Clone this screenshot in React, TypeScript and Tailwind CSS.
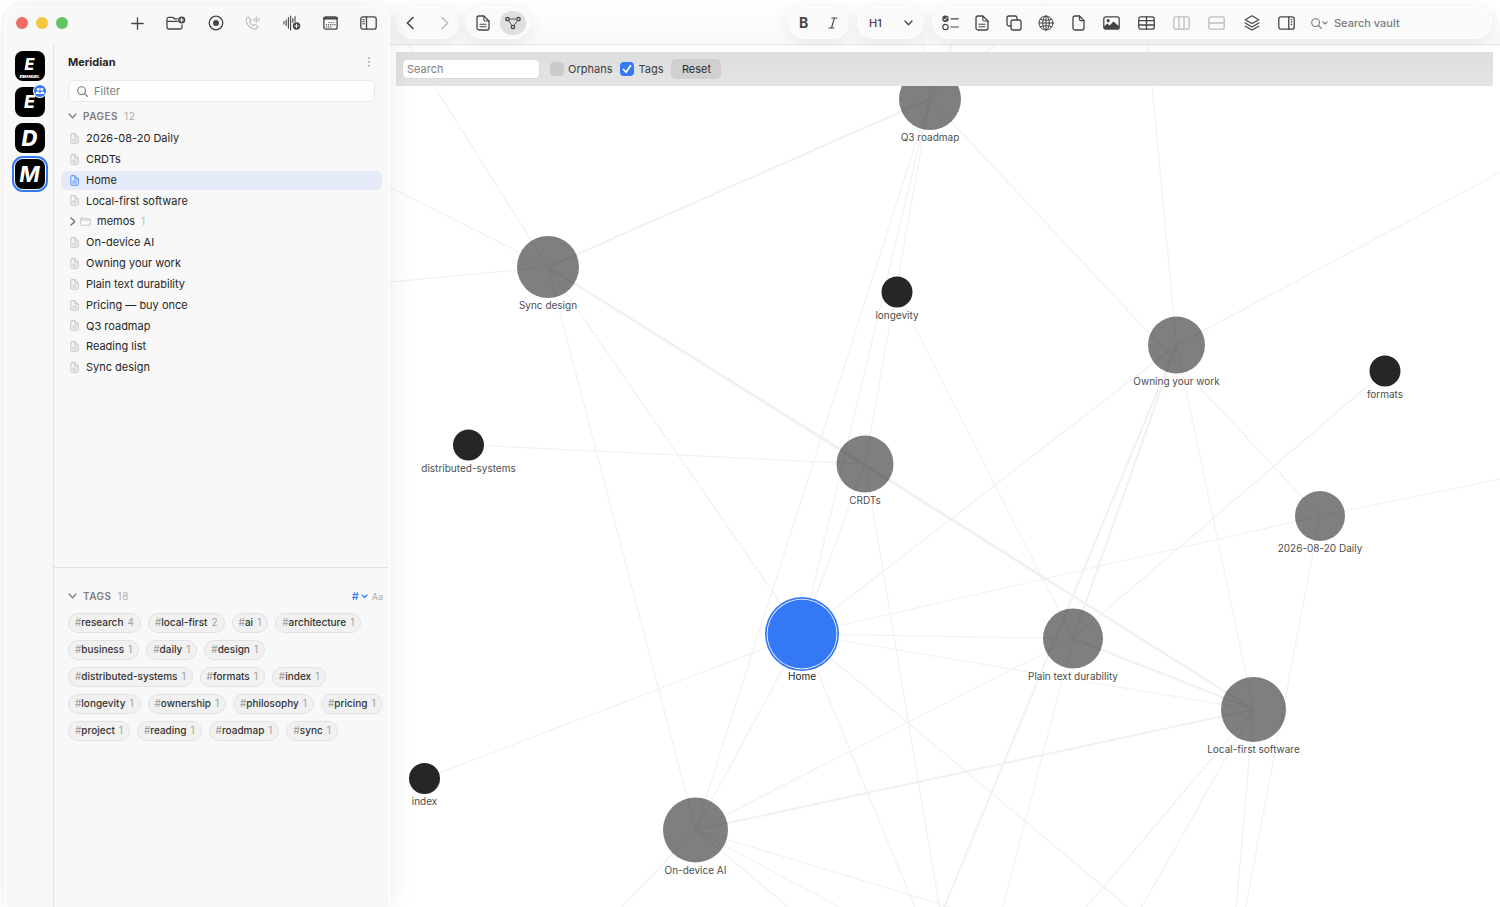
import type { ReactNode } from "react";
import clsx from "clsx";

type GraphNode = {
    id: string;
    x: number;
    y: number;
    r: number;
    kind: "page" | "tag" | "active";
};

type Edge = [x1: number, y1: number, x2: number, y2: number, width?: number];

const PAGES = [
    "2026-08-20 Daily",
    "CRDTs",
    "Home",
    "Local-first software",
    "memos",
    "On-device AI",
    "Owning your work",
    "Plain text durability",
    "Pricing — buy once",
    "Q3 roadmap",
    "Reading list",
    "Sync design",
];

const TAGS: [string, number][] = [
    ["research", 4],
    ["local-first", 2],
    ["ai", 1],
    ["architecture", 1],
    ["business", 1],
    ["daily", 1],
    ["design", 1],
    ["distributed-systems", 1],
    ["formats", 1],
    ["index", 1],
    ["longevity", 1],
    ["ownership", 1],
    ["philosophy", 1],
    ["pricing", 1],
    ["project", 1],
    ["reading", 1],
    ["roadmap", 1],
    ["sync", 1],
];

const NODES: GraphNode[] = [
    { id: "Q3 roadmap", x: 930, y: 99, r: 31, kind: "page" },
    { id: "Sync design", x: 548, y: 267, r: 31, kind: "page" },
    { id: "longevity", x: 897, y: 292, r: 15.5, kind: "tag" },
    { id: "Owning your work", x: 1176.5, y: 345, r: 28.5, kind: "page" },
    { id: "formats", x: 1385, y: 371, r: 15.5, kind: "tag" },
    { id: "distributed-systems", x: 468.5, y: 445, r: 15.5, kind: "tag" },
    { id: "CRDTs", x: 865, y: 464, r: 28.5, kind: "page" },
    { id: "2026-08-20 Daily", x: 1320, y: 516, r: 25, kind: "page" },
    { id: "Home", x: 802, y: 634, r: 34.5, kind: "active" },
    { id: "Plain text durability", x: 1073, y: 638.5, r: 30, kind: "page" },
    { id: "Local-first software", x: 1253.5, y: 709.5, r: 32.5, kind: "page" },
    { id: "index", x: 424.5, y: 778.5, r: 15.5, kind: "tag" },
    { id: "On-device AI", x: 695.5, y: 830, r: 32.5, kind: "page" },
];

const EDGES: Edge[] = [
    [548, 267, 930, 99, 2],
    [548, 267, 865, 464, 2],
    [548, 267, 1253.5, 709.5, 2],
    [865, 464, 1253.5, 709.5, 2],
    [548, 267, 380, 0],
    [548, 267, 380, 182],
    [548, 267, 380, 283],
    [548, 267, 695.5, 830],
    [548, 267, 802, 634],
    [468.5, 445, 865, 464],
    [930, 99, 695.5, 830],
    [930, 99, 802, 634],
    [930, 99, 865, 464],
    [930, 99, 1320, 516],
    [930, 99, 917, 0],
    [930, 99, 970, 0],
    [930, 99, 1049, 0],
    [865, 464, 802, 634],
    [865, 464, 940, 910],
    [897, 292, 1073, 638.5],
    [1176.5, 345, 1144, 0],
    [1176.5, 345, 1510, 167],
    [1176.5, 345, 802, 634],
    [1176.5, 345, 1073, 638.5, 2],
    [1176.5, 345, 943, 910, 2],
    [1176.5, 345, 1253.5, 709.5],
    [1385, 371, 1073, 638.5],
    [1320, 516, 802, 634],
    [1320, 516, 1510, 477],
    [1320, 516, 1245, 910],
    [802, 634, 1073, 638.5],
    [802, 634, 1253.5, 709.5],
    [802, 634, 1131, 910],
    [802, 634, 916, 910],
    [802, 634, 424.5, 778.5],
    [802, 634, 695.5, 830],
    [695.5, 830, 1073, 638.5],
    [695.5, 830, 1253.5, 709.5, 2],
    [695.5, 830, 619, 910],
    [695.5, 830, 792, 910],
    [695.5, 830, 845, 910],
    [695.5, 830, 960, 910],
    [1073, 638.5, 1253.5, 709.5, 2],
    [1073, 638.5, 1002, 910],
    [1253.5, 709.5, 1084, 910],
    [1253.5, 709.5, 1140, 910],
    [1253.5, 709.5, 1236, 910],
];

const NODE_FILL = {
    page: "fill-black/50",
    tag: "fill-black/85",
    active: "fill-[#3478f6]",
};

interface IconProps {
    w: number;
    h: number;
    stroke?: number;
    className?: string;
    children: ReactNode;
}

// Every glyph is drawn 1:1 in its own pixel box
function Icon({ w, h, stroke = 1.3, className, children }: IconProps) {
    return (
        <svg
            width={w}
            height={h}
            viewBox={`0 0 ${w} ${h}`}
            fill="none"
            stroke="currentColor"
            strokeWidth={stroke}
            strokeLinecap="round"
            strokeLinejoin="round"
            className={clsx("shrink-0", className)}
            aria-hidden
        >
            {children}
        </svg>
    );
}

function ChevronDown({ className }: { className?: string }) {
    return (
        <Icon w={9} h={6} className={className}>
            <path d="M1 1l3.5 3.7L8 1" />
        </Icon>
    );
}

function DocIcon() {
    return (
        <Icon w={14} h={16}>
            <path d="M3 1h4.8L13 6v7a2 2 0 0 1-2 2H3a2 2 0 0 1-2-2V3a2 2 0 0 1 2-2z" />
            <path d="M7.8 1v3.6A1.4 1.4 0 0 0 9.2 6H13M4 9.2h6M4 11.8h6" strokeWidth={1.1} />
        </Icon>
    );
}

function SmallDoc() {
    return (
        <Icon w={9} h={11} stroke={0.9}>
            <path d="M2 .7h2.8L8.3 4v5a1.2 1.2 0 0 1-1.2 1.2H2A1.2 1.2 0 0 1 .8 9V1.9A1.2 1.2 0 0 1 2 .7z" />
            <path d="M4.8.7V4h3.5M2.7 6.1h3.6M2.7 8h3.6" />
        </Icon>
    );
}

function Magnifier({ className }: { className?: string }) {
    return (
        <Icon w={11} h={11} stroke={1.1} className={className}>
            <circle cx="4.6" cy="4.6" r="3.9" />
            <path d="M7.5 7.5l2.9 2.9" />
        </Icon>
    );
}

interface ToolButtonProps {
    label: string;
    className?: string;
    disabled?: boolean;
    children: ReactNode;
}

function ToolButton({ label, className, disabled, children }: ToolButtonProps) {
    return (
        <button
            type="button"
            aria-label={label}
            disabled={disabled}
            className={clsx(
                "flex h-7 shrink-0 items-center justify-center",
                disabled ? "text-[#bdbdbd]" : "text-[#454545]",
                className,
            )}
        >
            {children}
        </button>
    );
}

function Pill({ className, children }: { className?: string; children: ReactNode }) {
    return (
        <div
            className={clsx(
                "flex h-8 items-center rounded-full border border-white bg-[#fafafa] shadow-[0_3px_18px_rgba(0,0,0,0.08)]",
                className,
            )}
        >
            {children}
        </div>
    );
}

function SidebarToolbar() {
    return (
        <div className="flex h-8 items-center justify-between pr-3 pl-2.5">
            <div className="flex gap-2">
                <span className="size-3 rounded-full bg-[#ed6a65]" />
                <span className="size-3 rounded-full bg-[#f3c840]" />
                <span className="size-3 rounded-full bg-[#61c462]" />
            </div>
            <div className="flex w-[246px] items-center justify-between">
                <ToolButton label="New page">
                    <Icon w={13} h={13}>
                        <path d="M6.5 .8v11.4M.8 6.5h11.4" />
                    </Icon>
                </ToolButton>
                <ToolButton label="New folder">
                    <Icon w={20} h={14}>
                        <path d="M11.2 2.8H8.4L6.9 1.3H2.6A1.7 1.7 0 0 0 1 3v8.3A1.7 1.7 0 0 0 2.7 13h11.6a1.7 1.7 0 0 0 1.7-1.7V9M1 5.4h10.6" />
                        <circle cx="15.7" cy="4" r="3.6" fill="currentColor" stroke="none" />
                        <path d="M15.7 2.2v3.6M13.9 4h3.6" stroke="#f8f8f8" strokeWidth={1} />
                    </Icon>
                </ToolButton>
                <ToolButton label="Record">
                    <Icon w={16} h={16}>
                        <circle cx="8" cy="8" r="6.8" />
                        <circle cx="8" cy="8" r="3" fill="currentColor" stroke="none" />
                    </Icon>
                </ToolButton>
                <ToolButton label="Record call" disabled>
                    <Icon w={16} h={14} stroke={1.1}>
                        <path d="M2.6 1.2C1.5 2 .9 3.2 1.1 4.6c.7 4 3.8 7.3 7.8 8.4 1.5.3 2.9-.2 3.8-1.3.4-.6.3-1.2-.2-1.6l-2-1.5c-.5-.3-1-.3-1.4.1l-.8.8c-.3.2-.6.2-.9 0-1.2-.9-2-1.8-2.6-2.9-.2-.3-.1-.6.1-.9l.7-.7c.4-.4.4-.9.1-1.4L4.3 1.5c-.4-.6-1.1-.7-1.7-.3z" />
                        <path d="M8.5 3v1M10 1.8v3.4M11.5.8v5.6M13 1.8v3.4M14.5 2.9v1.2" strokeWidth={0.9} />
                    </Icon>
                </ToolButton>
                <ToolButton label="New voice memo">
                    <Icon w={18} h={16} stroke={1.1}>
                        <path d="M1 6.5v2.5M3.2 5v5.5M5.4 2.5v10.5M7.6 1v14M9.8 3.5v4M12 1.5v5" />
                        <circle cx="13.5" cy="11" r="3.7" fill="currentColor" stroke="none" />
                        <path d="M13.5 9.2v3.6M11.7 11h3.6" stroke="#f8f8f8" strokeWidth={1} />
                    </Icon>
                </ToolButton>
                <ToolButton label="Daily note">
                    <Icon w={15} h={14}>
                        <rect x=".9" y=".8" width="13.2" height="12.4" rx="2" />
                        <path d="M1.2 2.4h12.6" strokeWidth={2.4} />
                        <path
                            d="M6 6.5h6M3.5 8.7h8.5M3.5 10.9h6"
                            strokeWidth={1.2}
                            strokeDasharray="0.1 2"
                        />
                    </Icon>
                </ToolButton>
                <ToolButton label="Toggle sidebar">
                    <Icon w={17} h={14}>
                        <rect x=".8" y=".8" width="15.4" height="12.4" rx="2.2" />
                        <path d="M6.5 1v12" />
                        <path d="M2.8 3.6h1.7M2.8 5.7h1.7M2.8 7.8h1.7" strokeWidth={1} />
                    </Icon>
                </ToolButton>
            </div>
        </div>
    );
}

function VaultRail() {
    const tile =
        "flex size-[30px] flex-col items-center justify-center rounded-lg bg-black text-white italic";
    return (
        <nav aria-label="Vaults" className="flex w-[47px] shrink-0 flex-col items-center gap-1.5 pt-[7px]">
            <button type="button" className={tile}>
                <span className="text-base leading-5 font-extrabold">E</span>
                <span className="text-[4px] leading-[5px] font-black">EMANUEL</span>
            </button>
            <button type="button" className={clsx(tile, "relative")}>
                <span className="text-lg leading-none font-extrabold">E</span>
                <span className="absolute -top-0.5 -right-px flex size-3 items-center justify-center rounded-full bg-[#3478f6] ring-1 ring-white">
                    <Icon w={10} h={8} stroke={0}>
                        <circle cx="3.2" cy="2.3" r="1.5" fill="#fff" />
                        <circle cx="6.8" cy="2.3" r="1.5" fill="#fff" />
                        <path d="M.5 7c0-3.2 4.300-3.2 4.300 0zM5.200 7c0-3.2 4.300-3.2 4.300 0z" fill="#fff" />
                    </Icon>
                </span>
            </button>
            <button type="button" className={tile}>
                <span className="text-[22px] leading-none font-extrabold">D</span>
            </button>
            <button
                type="button"
                className={clsx(tile, "outline-2 outline-offset-1 outline-[#3478f6]")}
            >
                <span className="text-[22px] leading-none font-bold">M</span>
            </button>
        </nav>
    );
}

function SectionTitle({ title, count }: { title: string; count: number }) {
    return (
        <h2 className="flex items-center text-[10px] leading-4 font-semibold tracking-wider text-[#7c7c7c]">
            <ChevronDown className="mr-1.5" />
            {title}
            <span className="ml-1.5 font-normal text-[#adadad]">{count}</span>
        </h2>
    );
}

function PageRow({ title }: { title: string }) {
    const active = title === "Home";
    const folder = title === "memos";
    return (
        <li>
            <button
                type="button"
                className={clsx(
                    "flex h-[19px] w-full items-center rounded-md pl-[9px] text-[11px] text-[#262626]",
                    active && "bg-[#e4eaf7]",
                )}
            >
                {folder ? (
                    <>
                        <Icon w={6} h={9} className="text-[#6a6a6a]">
                            <path d="M1 1l3.8 3.5L1 8" />
                        </Icon>
                        <Icon w={11} h={9} stroke={0.9} className="mr-1.5 ml-1 text-[#c2c2c2]">
                            <path d="M.6 3h9.8M1.8.8h2.3l1 1h4.1c.7 0 1.2.5 1.2 1.2v4c0 .7-.5 1.2-1.2 1.2H1.8C1.1 8.2.6 7.7.6 7V2C.6 1.3 1.1.8 1.8.8z" />
                        </Icon>
                        {title}
                        <span className="ml-1.5 text-[10px] text-[#b9b9b9]">1</span>
                    </>
                ) : (
                    <>
                        <span
                            className={clsx(
                                "mr-[7px]",
                                active ? "text-[#4a86f7]" : "text-[#bdbdbd]",
                            )}
                        >
                            <SmallDoc />
                        </span>
                        {title}
                    </>
                )}
            </button>
        </li>
    );
}

function Sidebar() {
    return (
        <aside className="relative z-20 mt-[7px] ml-1.5 flex w-[383px] shrink-0 flex-col rounded-t-2xl bg-[#f8f8f8] shadow-[0_0_28px_rgba(0,0,0,0.09)] ring-1 ring-white">
            <SidebarToolbar />
            <div className="mt-[5px] flex min-h-0 flex-1">
                <VaultRail />
                <div className="flex min-w-0 flex-1 flex-col border-l border-[#e4e4e4]">
                    <div className="flex min-h-0 flex-1 flex-col px-[7px]">
                        <div className="mt-2.5 flex h-4 items-center justify-between pr-[11px] pl-[7px]">
                            <h1 className="text-[11px] font-bold text-[#262626]">Meridian</h1>
                            <button type="button" aria-label="Vault options" className="text-[#777]">
                                <Icon w={4} h={10} stroke={0}>
                                    <circle cx="2" cy="1.2" r=".8" fill="currentColor" />
                                    <circle cx="2" cy="5" r=".8" fill="currentColor" />
                                    <circle cx="2" cy="8.8" r=".8" fill="currentColor" />
                                </Icon>
                            </button>
                        </div>
                        <label className="mx-[7px] mt-2.5 flex h-[22px] shrink-0 items-center rounded-[5px] border border-[#e9e9e9] bg-[#fdfdfd] px-2 text-[#777]">
                            <Magnifier className="mr-1.5" />
                            <input
                                type="text"
                                aria-label="Filter pages"
                                placeholder="Filter"
                                className="w-full bg-transparent text-[11px] outline-none placeholder:text-[#808080]"
                            />
                        </label>
                        <div className="mt-1.5 pl-[7px]">
                            <SectionTitle title="PAGES" count={12} />
                        </div>
                        <ul className="mt-1 grid h-[250px] auto-rows-fr items-center">
                            {PAGES.map((title) => (
                                <PageRow key={title} title={title} />
                            ))}
                        </ul>
                    </div>
                    <section className="h-[340px] shrink-0 border-t border-[#e2e2e2] pt-5 pl-3.5">
                        <div className="flex items-center justify-between pr-1.5">
                            <SectionTitle title="TAGS" count={18} />
                            <div className="flex items-center gap-1 text-[#3478f6]">
                                <button type="button" className="flex items-center gap-0.5 text-[11px] font-medium">
                                    #
                                    <Icon w={7} h={5} stroke={1.2}>
                                        <path d="M1 1l2.5 2.5L6 1" />
                                    </Icon>
                                </button>
                                <button type="button" className="text-[9px] text-[#a8a8a8]">
                                    Aa
                                </button>
                            </div>
                        </div>
                        <ul className="mt-2 flex flex-wrap gap-[7px]">
                            {TAGS.map(([name, count]) => (
                                <li key={name}>
                                    <button
                                        type="button"
                                        className="flex h-5 items-center rounded-full border border-[#e2e2e2] bg-[#f1f1f1] px-1.5 text-[10px] font-medium text-[#333]"
                                    >
                                        <span className="font-normal text-[#999]">#</span>
                                        {name}
                                        <span className="ml-1 font-normal text-[#a0a0a0]">{count}</span>
                                    </button>
                                </li>
                            ))}
                        </ul>
                    </section>
                </div>
            </div>
        </aside>
    );
}

function Header() {
    return (
        <header className="relative z-10 flex h-[45px] shrink-0 items-center border-b border-[#e3e3e3] bg-gradient-to-b from-white/80 to-[#f7f7f7]/80 pt-0.5 pr-2 pl-[7px]">
            <Pill className="w-[63px] justify-between px-[5px]">
                <ToolButton label="Back" className="w-4">
                    <Icon w={8} h={14} stroke={1.6}>
                        <path d="M7 1.5L1.3 7 7 12.5" />
                    </Icon>
                </ToolButton>
                <ToolButton label="Forward" disabled className="w-4">
                    <Icon w={8} h={14} stroke={1.6}>
                        <path d="M1 1.5L6.7 7 1 12.5" />
                    </Icon>
                </ToolButton>
            </Pill>
            <Pill className="ml-[7px] w-16 justify-between pr-[3px] pl-[9px]">
                <ToolButton label="Page view">
                    <DocIcon />
                </ToolButton>
                <button
                    type="button"
                    aria-label="Graph view"
                    className="flex h-6 w-[26px] items-center justify-center rounded-full bg-[#dfdfdf] text-[#454545]"
                >
                    <Icon w={16} h={14}>
                        <circle cx="2.5" cy="3" r="1.7" />
                        <circle cx="13.5" cy="3" r="1.7" />
                        <circle cx="8" cy="11" r="1.7" />
                        <path d="M5 3h6M3.8 5l2.8 4M12.2 5L9.4 9" strokeWidth={0.9} />
                    </Icon>
                </button>
            </Pill>
            <div className="flex-1" />
            <Pill className="w-[61px] justify-around">
                <ToolButton label="Bold" className="text-sm font-bold">
                    B
                </ToolButton>
                <ToolButton label="Italic">
                    <Icon w={10} h={12} stroke={1.1}>
                        <path d="M3.8 1h5M1 11h5M6.4 1L3.5 11" />
                    </Icon>
                </ToolButton>
            </Pill>
            <Pill className="ml-2 w-[67px]">
                <ToolButton label="Heading level" className="w-[35px] text-[11px] font-medium">
                    H1
                </ToolButton>
                <span className="h-4 w-px bg-[#e6e6e6]" />
                <ToolButton label="Choose heading" className="w-[30px]">
                    <ChevronDown />
                </ToolButton>
            </Pill>
            <Pill className="ml-2 w-[560px] pl-px">
                <ToolButton label="Task list" className="w-8">
                    <Icon w={17} h={16} stroke={1.2}>
                        <circle cx="3.5" cy="3.8" r="3.2" fill="currentColor" stroke="none" />
                        <path d="M2 4l1.1 1.1 2-2.7" stroke="#fafafa" strokeWidth={0.9} />
                        <circle cx="3.5" cy="12" r="2.7" />
                        <path d="M9 3.8h7.3M9 12h7.3" />
                    </Icon>
                </ToolButton>
                <ToolButton label="Insert page" className="w-8">
                    <DocIcon />
                </ToolButton>
                <ToolButton label="Duplicate" className="w-8">
                    <Icon w={16} h={16}>
                        <rect x="5" y="5" width="10" height="10" rx="2" />
                        <path d="M5 11H3a2 2 0 0 1-2-2V3a2 2 0 0 1 2-2h6a2 2 0 0 1 2 2v2" />
                    </Icon>
                </ToolButton>
                <ToolButton label="Web link" className="w-8">
                    <Icon w={16} h={16} stroke={1}>
                        <circle cx="8" cy="8" r="7" />
                        <ellipse cx="8" cy="8" rx="3.3" ry="7" />
                        <path d="M8 1v14M1 8h14M2.2 4.3c3.5 1.3 8.1 1.3 11.6 0M2.2 11.7c3.5-1.3 8.1-1.3 11.6 0" />
                    </Icon>
                </ToolButton>
                <ToolButton label="Attach file" className="w-8">
                    <Icon w={13} h={16}>
                        <path d="M3 1h4.5L12 5.6V13a2 2 0 0 1-2 2H3a2 2 0 0 1-2-2V3a2 2 0 0 1 2-2z" />
                        <path d="M7.5 1v3.3a1.3 1.3 0 0 0 1.3 1.3H12" />
                    </Icon>
                </ToolButton>
                <ToolButton label="Insert image" className="w-[35px]">
                    <Icon w={17} h={14}>
                        <rect x=".8" y=".8" width="15.4" height="12.4" rx="2" />
                        <circle cx="5.2" cy="4.7" r="1.6" fill="currentColor" stroke="none" />
                        <path
                            d="M1 10.5l3.3-2.9 2.2 1.8 4-4L16 10.2V12l-1 1H2l-1-1z"
                            fill="currentColor"
                            stroke="none"
                        />
                    </Icon>
                </ToolButton>
                <ToolButton label="Insert table" className="w-[35px]">
                    <Icon w={17} h={14}>
                        <rect x=".8" y=".8" width="15.4" height="12.4" rx="2" />
                        <path d="M1 4.7h15M1 9h15M8.5 1v12" />
                    </Icon>
                </ToolButton>
                <ToolButton label="Columns" disabled className="w-[35px]">
                    <Icon w={17} h={14}>
                        <rect x=".8" y=".8" width="15.4" height="12.4" rx="2" />
                        <path d="M6 1v12M11 1v12" />
                    </Icon>
                </ToolButton>
                <ToolButton label="Rows" disabled className="w-[35px]">
                    <Icon w={17} h={14}>
                        <rect x=".8" y=".8" width="15.4" height="12.4" rx="2" />
                        <path d="M1 7h15" />
                    </Icon>
                </ToolButton>
                <ToolButton label="Layers" className="w-[35px]">
                    <Icon w={16} h={16} stroke={1.2}>
                        <path d="M8 .8l6.8 3.9L8 8.6 1.2 4.7z" />
                        <path d="M1.2 8L8 11.9 14.8 8M1.2 11.2L8 15.1l6.8-3.9" />
                    </Icon>
                </ToolButton>
                <ToolButton label="Inspector" className="w-[35px]">
                    <Icon w={17} h={14}>
                        <rect x=".8" y=".8" width="15.4" height="12.4" rx="2.2" />
                        <path d="M10.8 1v12" />
                        <path d="M13.5 3.5v7" strokeWidth={1.5} strokeDasharray="0.1 2.3" />
                    </Icon>
                </ToolButton>
                <label className="ml-[7px] flex min-w-0 flex-1 items-center text-[#777]">
                    <Magnifier />
                    <Icon w={6} h={4} stroke={1.1} className="mr-1.5">
                        <path d="M.8.8L3 3 5.2.8" />
                    </Icon>
                    <input
                        type="text"
                        aria-label="Search vault"
                        placeholder="Search vault"
                        className="w-full min-w-0 bg-transparent pr-4 text-[11px] font-medium outline-none placeholder:text-[#7a7a7a]"
                    />
                </label>
            </Pill>
        </header>
    );
}

function FilterBar() {
    return (
        <form className="relative z-10 mx-[7px] mt-[7px] flex h-[34px] items-center bg-gradient-to-b from-[#dedede] to-[#e4e4e4] pl-1.5 text-[11px] text-[#3c3c3c]">
            <input
                type="text"
                aria-label="Search graph"
                placeholder="Search"
                className="h-5 w-[138px] rounded-[5px] border border-[#d9d9d9] bg-white px-1 text-[11px] outline-none placeholder:text-[#828282]"
            />
            <input
                id="orphans"
                type="checkbox"
                className="ml-2.5 size-3.5 appearance-none rounded bg-[#cbcbcb]"
            />
            <label htmlFor="orphans" className="ml-1">
                Orphans
            </label>
            <span className="relative ml-2 flex size-3.5">
                <input
                    id="tags"
                    type="checkbox"
                    defaultChecked
                    className="size-3.5 appearance-none rounded bg-[#3478f6]"
                />
                <Icon w={14} h={14} stroke={1.8} className="pointer-events-none absolute inset-0 text-white">
                    <path d="M3.5 7.5L6 10.2l4.5-6.4" />
                </Icon>
            </span>
            <label htmlFor="tags" className="ml-1">
                Tags
            </label>
            <button
                type="button"
                className="ml-2 h-5 w-[50px] rounded-[5px] bg-[#d0d0d0] text-[11px] text-[#2b2b2b]"
            >
                Reset
            </button>
        </form>
    );
}

function Graph() {
    return (
        <svg
            viewBox="389 0 1111 907"
            preserveAspectRatio="xMinYMin slice"
            className="absolute inset-0 h-full w-full"
            role="img"
            aria-label="Vault graph"
        >
            <g stroke="#f1f1f1">
                {EDGES.map(([x1, y1, x2, y2, width = 1.2], i) => (
                    <line key={i} x1={x1} y1={y1} x2={x2} y2={y2} strokeWidth={width} />
                ))}
            </g>
            {NODES.map((node) => (
                <g key={node.id}>
                    {node.kind === "active" && (
                        <>
                            <circle cx={node.x} cy={node.y} r={37} className="fill-[#3478f6]" />
                            <circle cx={node.x} cy={node.y} r={35.3} className="fill-white" />
                        </>
                    )}
                    {/* translucent, so the edges stay faintly visible underneath */}
                    <circle cx={node.x} cy={node.y} r={node.r} className={NODE_FILL[node.kind]} />
                    <text
                        x={node.x}
                        y={node.y + node.r + 11}
                        textAnchor="middle"
                        stroke="#fff"
                        strokeWidth={2}
                        paintOrder="stroke"
                        className={clsx(
                            "text-[10px]",
                            node.kind === "active" ? "fill-[#222]" : "fill-[#4d4d4d]",
                        )}
                    >
                        {node.id}
                    </text>
                </g>
            ))}
        </svg>
    );
}

export default function App() {
    return (
        <div className="flex h-screen overflow-hidden rounded-t-3xl bg-white font-['Inter','Liberation_Sans',sans-serif]">
            <Sidebar />
            <main className="relative flex min-w-0 flex-1 flex-col bg-white">
                <Graph />
                <Header />
                <FilterBar />
            </main>
        </div>
    );
}
